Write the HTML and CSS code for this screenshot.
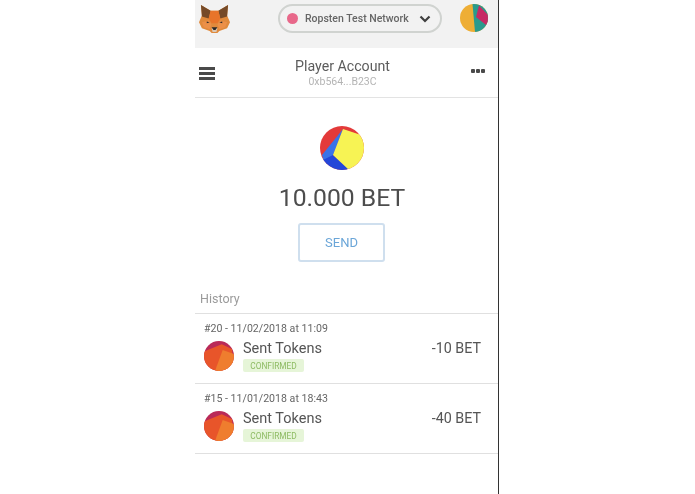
FILE: index.html
```html
<!DOCTYPE html>
<html lang="en">
<head>
<meta charset="utf-8">
<title>Player Account</title>
<link rel="stylesheet" href="styles.css">
</head>
<body>
<main class="phone">
  <header class="topbar">
    <svg class="fox" viewBox="0 0 32 32" aria-hidden="true">
      <path fill="#e08a3c" d="M2 3l10 6h8l10-6-1 11 3 7-3 6-8 3-2 2h-6l-2-2-8-3-3-6 3-7z"/>
      <path fill="#754a28" d="M2 3l10 6-2 8-7-2zM30 3l-10 6 2 8 7-2z"/>
      <path fill="#e8742a" d="M12 9h8l2 8-3 5h-6l-3-5z"/>
      <path fill="#ec9048" d="M3 21l7-2 3 4-2 5-6-2zM29 21l-7-2-3 4 2 5 6-2z"/>
      <path fill="#d9c8b6" d="M13 27h6l-1 4h-4z"/>
      <path fill="#2b2a2a" d="M13 26h6l-2 3h-2zM8 20l3 1-3 1zM24 20l-3 1 3 1z"/>
    </svg>
    <div class="network">
      <span class="network-dot"></span>
      <span class="network-name">Ropsten Test Network</span>
      <svg class="chevron" viewBox="0 0 12 8" aria-hidden="true"><path d="M1.500 1.500L6 6l4.500-4.500"/></svg>
    </div>
    <svg class="avatar" viewBox="0 0 28 28" aria-hidden="true">
      <rect width="28" height="28" fill="#eeae35"/>
      <path fill="#2a9a8c" d="M12.500 0H28V28H15z"/>
      <path fill="#c62a64" d="M19 1.500L28 11V21H26L16 13z"/>
    </svg>
  </header>

  <section class="account">
    <div class="menu" aria-hidden="true"><span></span><span></span><span></span></div>
    <div class="account-info">
      <div class="account-name">Player Account</div>
      <div class="account-address">0xb564...B23C</div>
    </div>
    <div class="more" aria-hidden="true"><span></span><span></span><span></span></div>
  </section>

  <section class="balance">
    <svg class="token" viewBox="0 0 44 44" aria-hidden="true">
      <rect width="44" height="44" fill="#e33a3a"/>
      <path fill="#3a73e8" d="M23 3L2 29 4 36 13 30z"/>
      <path fill="#2446d8" d="M13 29L3 34 10 44H30L29 43z"/>
      <path fill="#f7f354" d="M23 3L38 8 46 10V44H29L13 29z"/>
    </svg>
    <div class="amount">10.000 BET</div>
    <button class="send" type="button">SEND</button>
  </section>

  <h2 class="history-title">History</h2>
  <ul class="history">
    <li class="tx">
      <div class="tx-date">#20 - 11/02/2018 at 11:09</div>
      <div class="tx-body">
        <svg class="tx-icon" viewBox="0 0 30 30" aria-hidden="true">
          <rect width="30" height="30" fill="#b92a58"/>
          <path fill="#e8552a" d="M0 10.500L17.700 3.300 28 8 30 30H0z"/>
          <path fill="#ef7d2e" d="M18.700 9L30 13V30H11z"/>
        </svg>
        <div class="tx-main">
          <div class="tx-title">Sent Tokens</div>
          <span class="badge">CONFIRMED</span>
        </div>
        <div class="tx-amount">-10 BET</div>
      </div>
    </li>
    <li class="tx">
      <div class="tx-date">#15 - 11/01/2018 at 18:43</div>
      <div class="tx-body">
        <svg class="tx-icon" viewBox="0 0 30 30" aria-hidden="true">
          <rect width="30" height="30" fill="#b92a58"/>
          <path fill="#e8552a" d="M0 10.500L17.700 3.300 28 8 30 30H0z"/>
          <path fill="#ef7d2e" d="M18.700 9L30 13V30H11z"/>
        </svg>
        <div class="tx-main">
          <div class="tx-title">Sent Tokens</div>
          <span class="badge">CONFIRMED</span>
        </div>
        <div class="tx-amount">-40 BET</div>
      </div>
    </li>
  </ul>
</main>
</body>
</html>
```

FILE: styles.css
```css
* { box-sizing: border-box; }

html, body { margin: 0; height: 100%; background: #fff; }

body {
  font-family: Roboto, "Liberation Sans", sans-serif;
  color: #4d4d4d;
  overflow: hidden;
}

.phone {
  width: 304px;
  height: 494px;
  margin-left: 195px;
  border-right: 1px solid #333;
}

.topbar {
  height: 48px;
  background: #f2f2f2;
  display: flex;
  align-items: flex-start;
  padding: 2px 10px 0 4px;
  filter: blur(0.4px);
}

.fox { width: 31px; height: 31px; flex: none; }

.network {
  width: 164px;
  height: 29px;
  margin: 2px 0 0 48px;
  border: 2px solid #d0d3d0;
  border-radius: 15px;
  display: flex;
  align-items: center;
  padding: 0 9px 0 7px;
}

.network-dot {
  width: 11px;
  height: 11px;
  border-radius: 50%;
  background: #e8688a;
  flex: none;
}

.network-name {
  margin-left: 7px;
  font-size: 10.500px;
  font-weight: 500;
  color: #666;
  white-space: nowrap;
  flex: 1;
}

.chevron {
  width: 12px;
  height: 8px;
  fill: none;
  stroke: #3f3f3f;
  stroke-width: 2.200;
  flex: none;
}

.avatar {
  width: 28px;
  height: 28px;
  margin: 2px 0 0 18px;
  flex: none;
  border-radius: 50%;
}

.account {
  height: 50px;
  border-bottom: 1px solid #e3e3e3;
  display: flex;
  align-items: center;
  padding: 0 13px 0 4px;
  filter: blur(0.3px);
}

.menu {
  width: 16px;
  height: 13px;
  display: flex;
  flex-direction: column;
  justify-content: space-between;
  flex: none;
  margin-top: 1px;
}

.menu span { height: 3px; background: #4a4a4a; }

.account-info { flex: 1; text-align: center; padding-top: 1px; margin-left: -1px; }

.account-name { font-size: 14.200px; line-height: 18px; color: #5c5c5c; }

.account-address { font-size: 10.500px; line-height: 14px; color: #b4b4b4; }

.more { display: flex; gap: 1px; flex: none; margin-top: -3px; }

.more span { width: 4px; height: 4px; border-radius: 1px; background: #4a4a4a; }

.balance {
  display: flex;
  flex-direction: column;
  align-items: center;
  padding: 28px 9px 0 0;
  filter: blur(0.3px);
}

.token { width: 44px; height: 44px; border-radius: 50%; }

.amount {
  font-size: 24.700px;
  line-height: 30px;
  margin-top: 13px;
  color: #4d4d4d;
  white-space: nowrap;
}

.send {
  width: 87px;
  height: 39px;
  margin: 10px 1px 0 0;
  background: #fff;
  border: 2px solid #cfdfee;
  border-radius: 3px;
  color: #6ba6d8;
  font: 400 13px Roboto, "Liberation Sans", sans-serif;
}

.history-title {
  margin: 29px 0 0;
  padding: 0 0 6px 5px;
  height: 22px;
  font-size: 12.500px;
  line-height: 16px;
  font-weight: 400;
  color: #9b9b9b;
  filter: blur(0.3px);
}

.history {
  list-style: none;
  margin: 0;
  padding: 0;
  border-top: 1px solid #e0e0e0;
  filter: blur(0.3px);
}

.tx {
  height: 70px;
  border-bottom: 1px solid #e0e0e0;
  padding: 8px 17px 0 9px;
}

.tx-date { font-size: 10.600px; line-height: 14px; color: #666; }

.tx-body { display: flex; align-items: flex-start; margin-top: 5px; }

.tx-icon { width: 30px; height: 30px; flex: none; border-radius: 50%; }

.tx-main { flex: 1; margin-left: 9px; margin-top: -1px; }

.tx-title { font-size: 14.500px; line-height: 17px; color: #555; }

.badge {
  display: block;
  width: 61px;
  height: 13px;
  margin-top: 2px;
  background: #e6f5d8;
  border-radius: 2px;
  color: #8dbb62;
  font-size: 8.300px;
  line-height: 14px;
  text-align: center;
}

.tx-amount { font-size: 14.300px; line-height: 17px; margin-top: -1px; color: #555; }
```
